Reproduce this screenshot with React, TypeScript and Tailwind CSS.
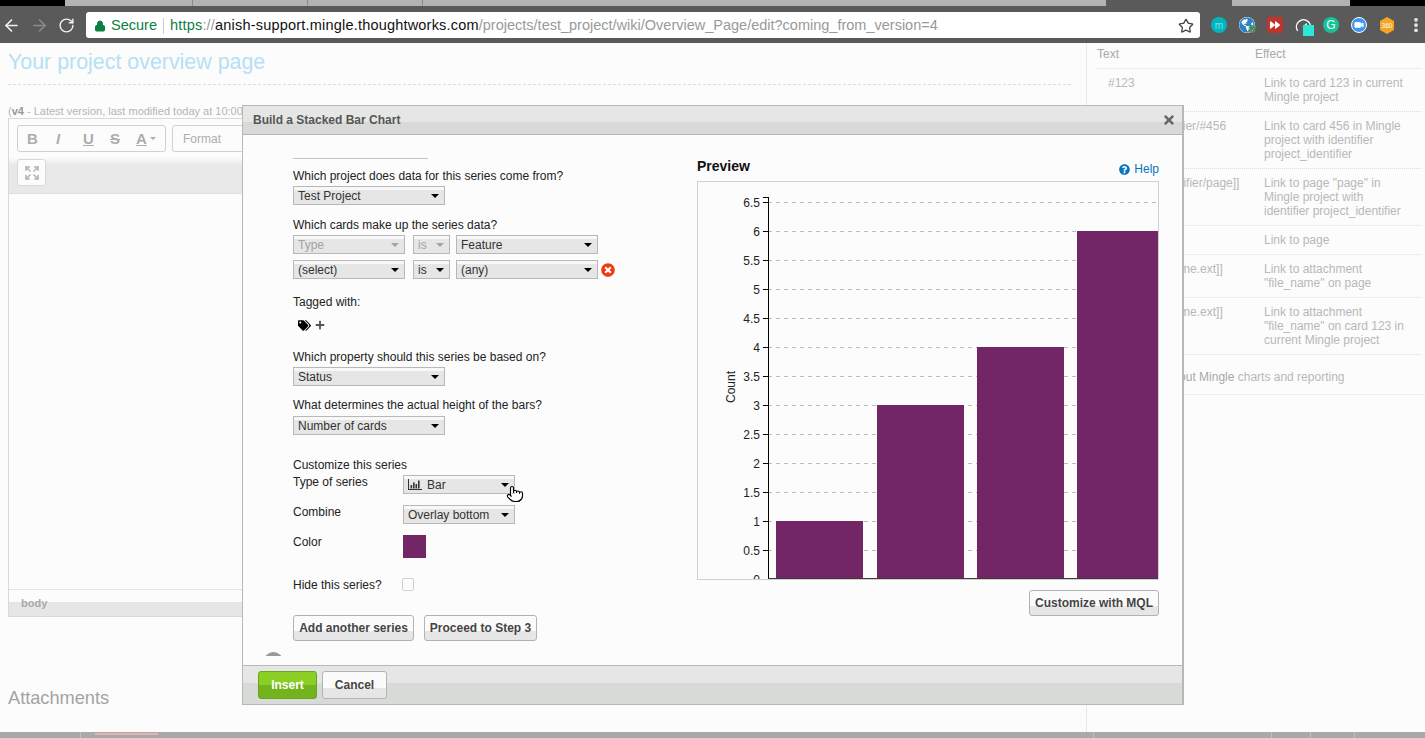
import { ArrowLeft, ArrowRight, Expand, Gauge, Lock, MoreVertical, Pointer, RotateCw, Star, Video } from 'lucide-react';
import { FaForward, FaGlobeAmericas, FaPlus, FaQuestionCircle, FaSyncAlt, FaTags, FaTimes, FaTimesCircle } from 'react-icons/fa';

const font = { fontFamily: '"Liberation Sans", Arial, sans-serif' };

const Select = ({ label, w, disabled, icon }: { label: string; w: string; disabled?: boolean; icon?: boolean }) => (
  <div
    className={`${w} h-[19px] shrink-0 flex items-center justify-between pl-[4px] pr-[5px] border border-[#b8b8b8] bg-[linear-gradient(#f8f8f8_0,#f8f8f8_3px,#e6e6e6_3px,#e6e6e6_100%)] text-[12px] leading-none ${disabled ? 'text-[#a3a3a3]' : 'text-[#333]'}`}
  >
    <span className="flex items-center gap-[5px] whitespace-nowrap">
      {icon && (
        <svg width="14" height="11" viewBox="0 0 14 11" fill="#333">
          <path d="M0 0h1v10h13v1H0z" />
          <rect x="2.5" y="6" width="1.6" height="3.5" />
          <rect x="5" y="3.5" width="1.6" height="6" />
          <rect x="7.5" y="5" width="1.6" height="4.5" />
          <rect x="10" y="1.5" width="1.6" height="8" />
        </svg>
      )}
      {label}
    </span>
    <span className={`w-0 h-0 border-x-[4px] border-x-transparent border-t-[4px] ${disabled ? 'border-t-[#a3a3a3]' : 'border-t-black'}`} />
  </div>
);

const Button = ({ label, w }: { label: string; w: string }) => (
  <div className={`${w} h-[26px] shrink-0 flex items-center justify-center rounded-[3px] border border-[#b3b3b3] bg-[linear-gradient(#fbfbfb_0,#fbfbfb_62%,#e6e6e6_62%,#e6e6e6_100%)] text-[12px] font-bold text-[#444] whitespace-nowrap`}>
    {label}
  </div>
);

const Label = ({ children, className = '' }: { children: string; className?: string }) => (
  <div className={`text-[12px] leading-[16px] text-[#222] ${className}`}>{children}</div>
);

const helpRows = [
  { h: 'h-[43px]', text: '#123', effect: ['Link to card 123 in current', 'Mingle project'] },
  { h: 'h-[57px]', text: 'project_identifier/#456', effect: ['Link to card 456 in Mingle', 'project with identifier', 'project_identifier'] },
  { h: 'h-[57px]', text: '[[project_identifier/page]]', effect: ['Link to page "page" in', 'Mingle project with', 'identifier project_identifier'] },
  { h: 'h-[29px]', text: '[[page]]', effect: ['Link to page'] },
  { h: 'h-[43px]', text: '[[page/file_name.ext]]', effect: ['Link to attachment', '"file_name" on page'] },
  { h: 'h-[57px]', text: '[[#123/file_name.ext]]', effect: ['Link to attachment', '"file_name" on card 123 in', 'current Mingle project'] },
];

const ticks = ['0', '0.5', '1', '1.5', '2', '2.5', '3', '3.5', '4', '4.5', '5', '5.5', '6', '6.5'];
const bars = [
  { x: 78, w: 87, v: 1 },
  { x: 179, w: 87, v: 3 },
  { x: 279, w: 87, v: 4 },
  { x: 379, w: 82, v: 6 },
];

// chart coords: svg origin is at page (698, 182)
const Chart = () => {
  const y = (v: number) => 397 - v * 58;
  return (
    <svg width="460" height="397" viewBox="0 0 460 397" className="block" style={font}>
      {ticks.map((t, i) => (
        <g key={t}>
          {i > 0 && <line x1="70" x2="460" y1={y(i / 2) + 0.5} y2={y(i / 2) + 0.5} stroke="#bdbdbd" strokeDasharray="4 4" />}
          <line x1="65" x2="70" y1={y(i / 2) + 0.5} y2={y(i / 2) + 0.5} stroke="#000" />
          <text x="62" y={y(i / 2) + 4.5} textAnchor="end" fontSize="12" fill="#222">
            {t}
          </text>
        </g>
      ))}
      {bars.map((b) => (
        <rect key={b.x} x={b.x} y={y(b.v)} width={b.w} height={397 - y(b.v)} fill="#722665" />
      ))}
      <line x1="65" x2="70" y1="15.5" y2="15.5" stroke="#000" />
      <line x1="70.5" x2="70.5" y1="15" y2="397" stroke="#000" />
      <line x1="70" x2="460" y1="396.5" y2="396.5" stroke="#3a3a3a" />
      <text transform="translate(37 205) rotate(-90)" textAnchor="middle" fontSize="12" fill="#222">
        Count
      </text>
    </svg>
  );
};

const BrowserBar = () => (
  <div className="shrink-0">
    {/* Tab strip */}
    <div className="h-[6px] bg-[#5a5a5a] flex">
      <div className="w-[65px] bg-black" />
      <div className="w-[128px] bg-[#b3b3b3] border-r border-[#8a8a8a]" />
      <div className="w-[115px] bg-[#b3b3b3] border-r border-[#8a8a8a]" />
      <div className="w-[115px] bg-[#b3b3b3] border-r border-[#8a8a8a]" />
      <div className="w-[683px] bg-[#b3b3b3]" />
      <div className="w-[126px]" />
      <div className="w-[118px] bg-[#b3b3b3]" />
      <div className="flex-1 bg-black" />
    </div>
    {/* Toolbar */}
    <div className="h-[37px] bg-[#5a5a5a] flex items-center pt-[1px]">
      <div className="w-[86px] flex items-center pl-[2px] gap-[9px]">
        <ArrowLeft size={19} className="text-[#f2f2f2]" />
        <ArrowRight size={19} className="text-[#8b8b8b]" />
        <RotateCw size={17} className="text-[#f2f2f2]" />
      </div>
      <div className="w-[1114px] h-[26px] bg-white rounded-[3px] flex items-center pl-[8px] pr-[6px] pt-[1px] text-[14.5px]">
        <Lock size={12} className="text-[#0b8043] fill-[#0b8043] mr-[5px]" />
        <span className="text-[#0b8043]">Secure</span>
        <span className="w-px h-[16px] bg-[#ccc] mx-[6px]" />
        <span className="whitespace-nowrap">
          <span className="tracking-[0.2px] text-[#0b8043]">https</span>
          <span className="tracking-[0.2px] text-[#999]">://</span>
          <span className="tracking-[0.2px] text-[#111]">anish-support.mingle.thoughtworks.com</span>
          <span className="text-[#999]">/projects/test_project/wiki/Overview_Page/edit?coming_from_version=4</span>
        </span>
        <Star size={16} className="ml-auto text-[#444]" />
      </div>
      {/* Extension icons */}
      <div className="flex items-center pl-[11px] gap-[12px]">
        <div className="w-[16px] h-[16px] rounded-full bg-[#00b5bd] flex items-center justify-center text-[10px] text-[#7fe3e6]">m</div>
        <div className="relative w-[16px] h-[16px]">
          <FaGlobeAmericas size={16} className="text-[#2c82c9] bg-white rounded-full" />
          <FaSyncAlt size={8} className="absolute right-[-1px] bottom-[0px] text-[#5a9a32]" />
        </div>
        <div className="w-[16px] h-[16px] rounded-[2px] bg-[#c0342b] flex items-center justify-center">
          <FaForward size={10} className="text-white" />
        </div>
        <div className="relative w-[16px] h-[16px]">
          <Gauge size={17} className="text-white" />
          <div className="absolute left-[8px] top-[8px] w-[11px] h-[11px] bg-[#2ee6d6]" />
        </div>
        <div className="w-[16px] h-[16px] rounded-full bg-[#15c39a] flex items-center justify-center text-[12px] leading-none text-white">G</div>
        <div className="w-[16px] h-[16px] rounded-full bg-[#3c97f2] border border-white flex items-center justify-center">
          <Video size={10} className="text-white fill-white" />
        </div>
        <svg width="16" height="17" viewBox="0 0 16 17">
          <path d="M8 0l7 4v9l-7 4-7-4V4z" fill="#f4a522" />
          <text x="8" y="11" textAnchor="middle" fontSize="6.5" fill="#fff" style={font}>360</text>
        </svg>
        <MoreVertical size={18} strokeWidth={3} className="text-[#eee]" />
      </div>
    </div>
  </div>
);

const Page = () => (
  <div className="flex-1 min-h-0 flex bg-[#fcfcfc]">
    {/* Left: editor */}
    <div className="w-[1087px] shrink-0 border-r border-[#e8e8e8] pl-[8px]">
      <div className="w-[1063px] h-[42px] border-b border-dashed border-[#dcdcdc] pt-[6px] text-[21.4px] leading-[27px] text-[#b5e0f5]">Your project overview page</div>
      <div className="mt-[19px] text-[11px] leading-[14px] text-[#b5b5b5] whitespace-nowrap">
        (<b className="text-[#999]">v4</b> - Latest version, last modified today at 10:00 AM
      </div>
      <div className="w-[960px] h-[499px] border border-[#d9d9d9] flex flex-col">
        <div className="h-[75px] border-b border-[#e0e0e0] bg-[linear-gradient(#fcfcfc_0,#fcfcfc_38px,#e8e8e8_46px,#e8e8e8_100%)] pl-[8px] pt-[6px]">
          <div className="flex gap-[6px]">
            <div className="w-[149px] h-[27px] rounded-[3px] border border-[#d0d0d0] bg-[#fcfcfc] flex items-center pl-[9px] text-[#adadad] text-[15px] leading-none">
              <b className="w-[29px]">B</b>
              <i className="w-[27px] font-bold">I</i>
              <u className="w-[27px] font-bold">U</u>
              <s className="w-[26px] font-bold">S</s>
              <u className="font-bold">A</u>
              <span className="ml-[3px] w-0 h-0 border-x-[3px] border-x-transparent border-t-[3px] border-t-[#adadad]" />
            </div>
            <div className="w-[120px] h-[27px] rounded-[3px] border border-[#d0d0d0] bg-[#fcfcfc] flex items-center pl-[10px] text-[12px] text-[#adadad]">Format</div>
          </div>
          <div className="mt-[7px] w-[29px] h-[27px] rounded-[3px] border border-[#d8d8d8] bg-[#fcfcfc] flex items-center justify-center">
            <Expand size={16} strokeWidth={2.5} className="text-[#b5b5b5]" />
          </div>
        </div>
        <div className="flex-1" />
        <div className="h-[27px] border-t border-[#e4e4e4] bg-[linear-gradient(#fcfcfc_0,#fcfcfc_12px,#e6e6e6_12px,#e6e6e6_100%)] pl-[12px] pt-[6px] text-[11px] leading-[14px] font-bold text-[#aaa]">body</div>
      </div>
      <div className="mt-[69px] text-[18.2px] leading-[24px] text-[#a3a3a3]">Attachments</div>
    </div>

    {/* Right: help table */}
    <div className="flex-1 text-[12px] leading-[14px] text-[#b8b8b8] pl-[10px] pr-[4px]">
      <div className="h-[26px] grid grid-cols-[158px_1fr] pt-[4px] text-[#a8a8a8] border-b border-dotted border-[#ddd]">
        <span>Text</span>
        <span>Effect</span>
      </div>
      {helpRows.map((row) => (
        <div key={row.text} className={`${row.h} grid grid-cols-[156px_1fr] pl-[11px] pt-[7px] border-b border-dotted border-[#ddd]`}>
          <span className="whitespace-nowrap">{row.text}</span>
          <span>
            {row.effect.map((line) => (
              <span key={line} className="block whitespace-nowrap">{line}</span>
            ))}
          </span>
        </div>
      ))}
      <div className="pt-[15px] pb-[10px] pl-[4px] whitespace-nowrap border-b border-[#eee] -mr-[4px]">
        Learn more <span className="text-[#a8a8a8]">about Mingle</span> charts and reporting
      </div>
    </div>
  </div>
);

const Modal = () => (
  <div className="absolute left-[242px] top-[105px] w-[942px] h-[600px] border border-[#b8b8b8] border-r-2 bg-[#fcfcfc] flex flex-col">
    <div className="h-[29px] shrink-0 border-b border-[#b5b5b5] bg-[linear-gradient(#e6e6e6_0,#e6e6e6_16px,#d8dad7_16px,#d8dad7_100%)] flex items-center justify-between pl-[10px] pr-[6px]">
      <span className="text-[12px] font-bold text-[#555]">Build a Stacked Bar Chart</span>
      <FaTimes size={14} className="text-[#666]" />
    </div>

    <div className="flex-1 min-h-0 flex">
      {/* Series form */}
      <div className="w-[454px] h-[521px] shrink-0 overflow-hidden pl-[50px] relative">
        <div className="w-[135px] h-[24px] border-b border-[#c4c4c4]" />
        <Label className="mt-[9px]">Which project does data for this series come from?</Label>
        <div className="mt-[2px]"><Select label="Test Project" w="w-[152px]" /></div>
        <Label className="mt-[12px]">Which cards make up the series data?</Label>
        <div className="mt-[2px] flex gap-[8px]">
          <Select label="Type" w="w-[112px]" disabled />
          <div className="flex gap-[6px]">
            <Select label="is" w="w-[37px]" disabled />
            <Select label="Feature" w="w-[142px]" />
          </div>
        </div>
        <div className="mt-[6px] flex gap-[8px] items-center">
          <Select label="(select)" w="w-[112px]" />
          <div className="flex gap-[6px]">
            <Select label="is" w="w-[37px]" />
            <Select label="(any)" w="w-[142px]" />
          </div>
          <FaTimesCircle size={14} className="text-[#ee3a12] -ml-[5px]" />
        </div>
        <Label className="mt-[15px]">Tagged with:</Label>
        <div className="mt-[7px] ml-[5px] flex items-center gap-[4px] h-[16px]">
          <FaTags size={13} className="text-black" />
          <FaPlus size={10} className="text-[#555]" />
        </div>
        <Label className="mt-[16px]">Which property should this series be based on?</Label>
        <div className="mt-[2px]"><Select label="Status" w="w-[152px]" /></div>
        <Label className="mt-[11px]">What determines the actual height of the bars?</Label>
        <div className="mt-[3px]"><Select label="Number of cards" w="w-[152px]" /></div>

        <Label className="mt-[22px]">Customize this series</Label>
        <div className="mt-[2px] grid grid-cols-[110px_1fr]">
          <Label className="-mt-[1px]">Type of series</Label>
          <Select label="Bar" w="w-[112px]" icon />
          <Label className="mt-[10px]">Combine</Label>
          <div className="mt-[11px]"><Select label="Overlay bottom" w="w-[112px]" /></div>
          <Label className="mt-[10px]">Color</Label>
          <div className="mt-[11px]"><div className="w-[23px] h-[23px] bg-[#722665]" /></div>
          <Label className="mt-[19px]">Hide this series?</Label>
          <div className="mt-[20px] -ml-[1px]"><div className="w-[12px] h-[13px] rounded-[2px] border border-[#d0d0d0] bg-[#fcfcfc]" /></div>
        </div>
        <div className="mt-[22px] flex gap-[10px]">
          <Button label="Add another series" w="w-[121px]" />
          <Button label="Proceed to Step 3" w="w-[113px]" />
        </div>
        <div className="absolute left-[21px] top-[517px] flex items-center gap-[10px] text-[12px] font-bold text-[#999]">
          <span className="w-[19px] h-[19px] rounded-full bg-[#999]" />
          Create another chart
        </div>
      </div>

      {/* Preview */}
      <div className="w-[462px] shrink-0 relative">
        <div className="h-[46px] flex items-start justify-between pt-[23px]">
          <span className="text-[14px] leading-[16px] font-bold text-[#111]">Preview</span>
          <span className="flex items-center gap-[4px] text-[12px] leading-[16px] text-[#0875bb] pt-[3px]">
            <FaQuestionCircle size={11} />
            Help
          </span>
        </div>
        <div className="w-[462px] h-[399px] border border-[#d0d0d0] overflow-hidden">
          <Chart />
        </div>
        <div className="mt-[10px] flex justify-end">
          <Button label="Customize with MQL" w="w-[130px]" />
        </div>
      </div>
    </div>

    <div className="h-[39px] shrink-0 border-t border-[#b8b8b8] bg-[linear-gradient(#e6e6e6_0,#e6e6e6_17px,#d8dad7_17px,#d8dad7_100%)] flex items-center pl-[15px] gap-[5px]">
      <div className="w-[59px] h-[28px] rounded-[3px] border border-[#6ba51e] bg-[linear-gradient(#8ccf24_0,#8ccf24_50%,#72b31e_50%,#72b31e_100%)] flex items-center justify-center text-[12px] font-bold text-white">Insert</div>
      <div className="w-[65px] h-[28px] rounded-[3px] border border-[#b3b3b3] bg-[linear-gradient(#fbfbfb_0,#fbfbfb_62%,#e6e6e6_62%,#e6e6e6_100%)] flex items-center justify-center text-[12px] font-bold text-[#444]">Cancel</div>
    </div>
  </div>
);

export default function App() {
  return (
    <div className="relative w-[1425px] h-[738px] overflow-hidden flex flex-col" style={font}>
      <BrowserBar />
      <Page />
      {/* Bottom status strip */}
      <div className="h-[6px] shrink-0 bg-[#a9a9a9] flex">
        <div className="w-[81px] border-r border-[#c0c0c0]" />
        <div className="ml-[14px] w-[63px] h-[2px] mt-[1px] bg-[#e3b3b8]" />
        <div className="ml-[935px] w-[1px] bg-[#c0c0c0]" />
        <div className="ml-[177px] w-[1px] bg-[#c0c0c0]" />
        <div className="ml-[38px] w-[1px] bg-[#c0c0c0]" />
        <div className="ml-[43px] w-[1px] bg-[#c0c0c0]" />
      </div>
      <Modal />
      {/* Mouse cursor */}
      <div className="absolute left-[506px] top-[485px]">
        <Pointer size={18} strokeWidth={1.5} className="text-black fill-white" />
      </div>
    </div>
  );
}
